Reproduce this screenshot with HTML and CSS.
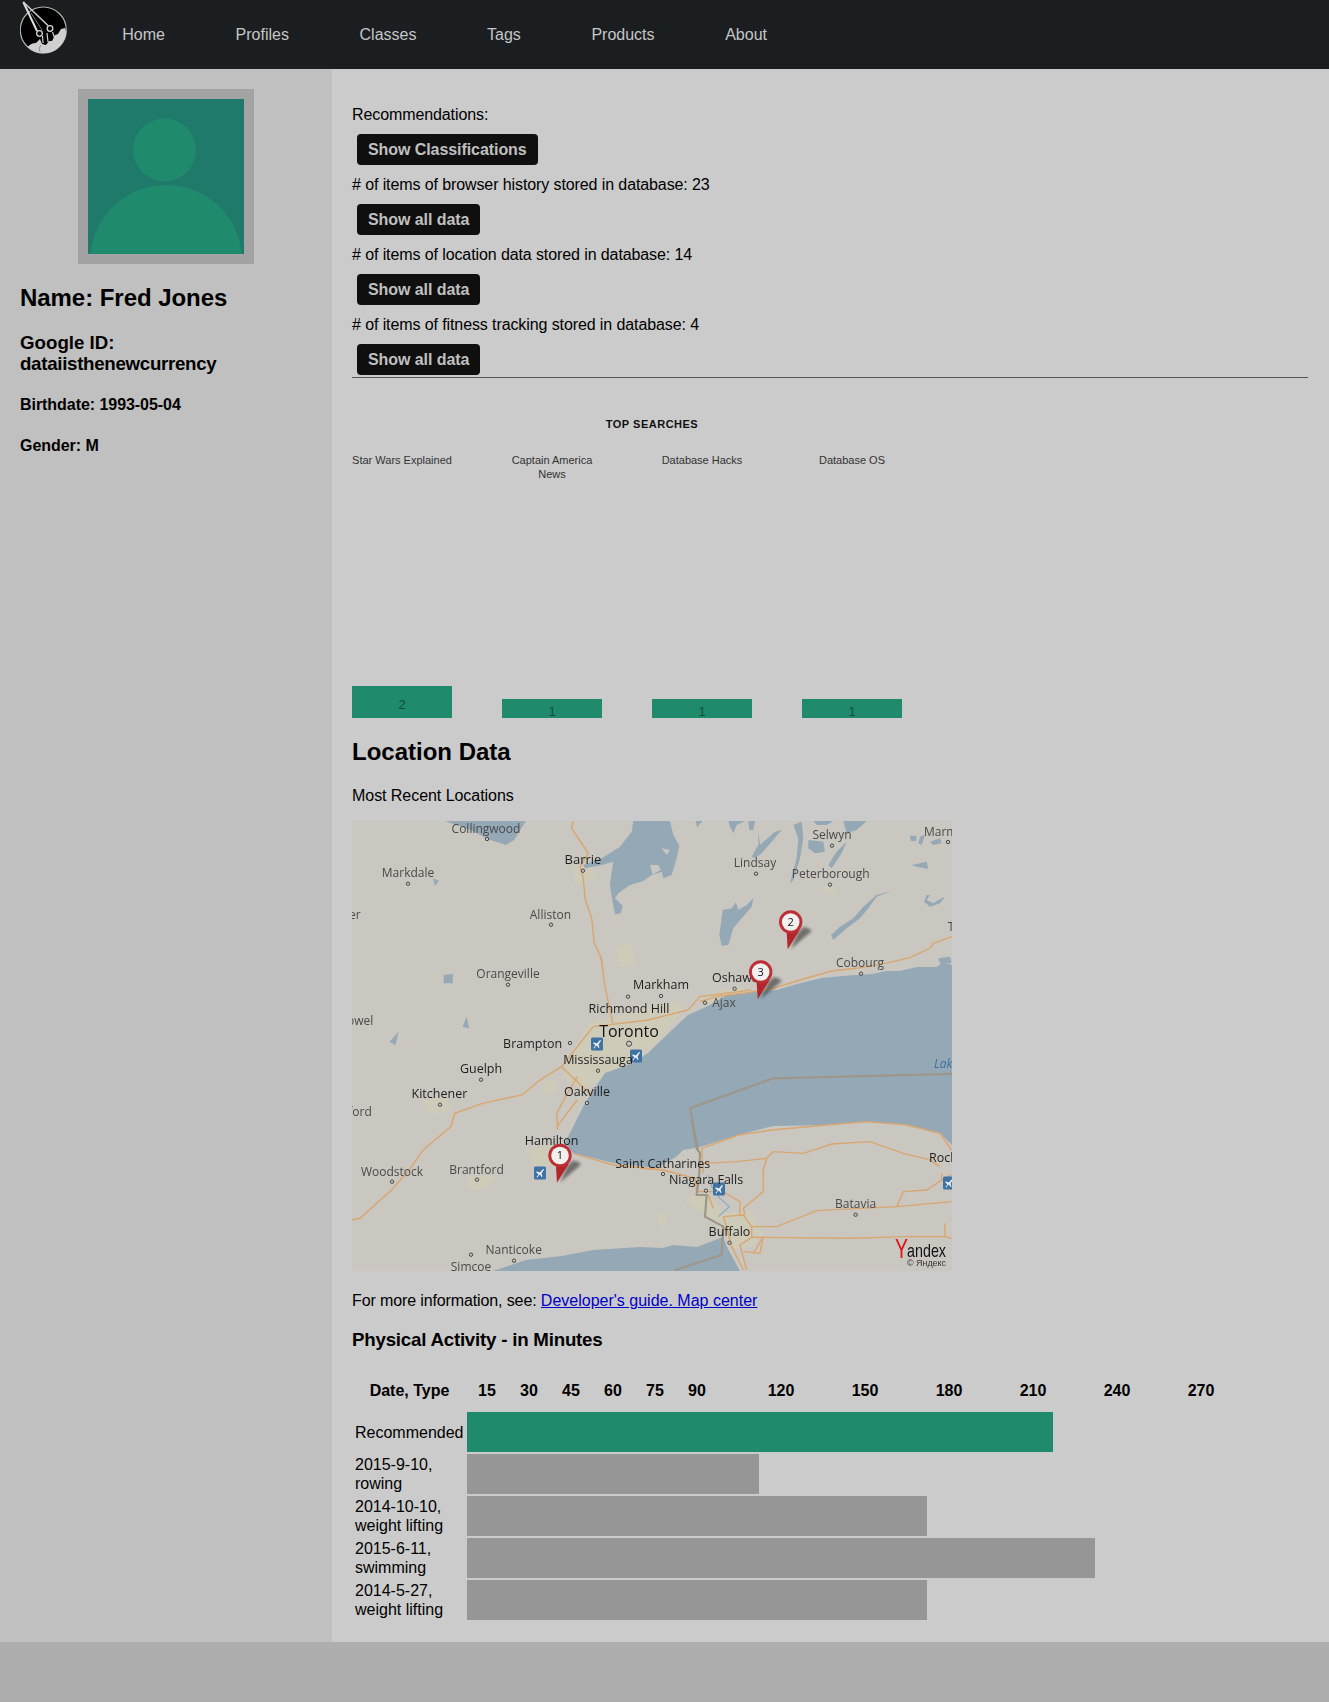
FILE: index.html
```html
<!DOCTYPE html>
<html lang="en">
<head>
<meta charset="utf-8">
<title>Fred Jones</title>
<link rel="stylesheet" href="styles.css">
</head>
<body>
<header class="topbar">
  <a class="logo" href="#" aria-label="Home">
    <svg width="52" height="56" viewBox="20 0 52 56">
      <circle cx="43.3" cy="30" r="23" fill="#000" stroke="#b0b0b0" stroke-width="1.2"/>
      <path d="M27.5 47 Q31 43 36 43 L40 39 L42 44 L46 45 L49 41 L52 41 L55 35 L58 34 L61 29 L65 28 L66.3 32 A23 23 0 0 1 27.5 47Z" fill="#cfcfcf"/>
      <path d="M40 52 Q38 48 41 45" stroke="#8a8a8a" stroke-width="1" fill="none"/>
      <path d="M23.3 2 L37 31" stroke="#dedede" stroke-width="2" fill="none"/>
      <path d="M23.3 2 L48 25.5" stroke="#cfcfcf" stroke-width="1.5" fill="none"/>
      <path d="M31 13 L42 30" stroke="#777" stroke-width="1" fill="none"/>
      <circle cx="39.5" cy="33.5" r="2.8" fill="#000" stroke="#d5d5d5" stroke-width="1.3"/>
      <circle cx="50" cy="28.5" r="2.8" fill="#000" stroke="#d5d5d5" stroke-width="1.3"/>
      <path d="M42.5 36 L43 43 M47 33 L48 42 M52.5 32 L55 39" stroke="#cfcfcf" stroke-width="1.2" fill="none"/>
    </svg>
  </a>
  <nav class="mainnav">
    <a href="#">Home</a>
    <a href="#">Profiles</a>
    <a href="#">Classes</a>
    <a href="#">Tags</a>
    <a href="#">Products</a>
    <a href="#">About</a>
  </nav>
</header>

<div class="layout">
  <aside class="sidebar">
    <div class="avatar">
      <svg width="156" height="155" viewBox="0 0 156 155">
        <rect width="156" height="155" fill="#1f7a6b"/>
        <circle cx="76.5" cy="51" r="31.5" fill="#1f8a6c"/>
        <path d="M2.7 155 A75.8 75.8 0 0 1 153.7 155Z" fill="#1f8a6c"/>
      </svg>
    </div>
    <h2 class="name">Name: Fred Jones</h2>
    <h3 class="gid">Google ID: <span class="handle">dataiisthenewcurrency</span></h3>
    <h4 class="fact">Birthdate: 1993-05-04</h4>
    <h4 class="fact">Gender: M</h4>
  </aside>

  <main class="content">
    <section class="stats">
      <div class="stat-text">Recommendations:</div>
      <button class="btn">Show Classifications</button>
      <div class="stat-text"># of items of browser history stored in database: 23</div>
      <button class="btn">Show all data</button>
      <div class="stat-text"># of items of location data stored in database: 14</div>
      <button class="btn">Show all data</button>
      <div class="stat-text"># of items of fitness tracking stored in database: 4</div>
      <button class="btn">Show all data</button>
    </section>
    <hr class="rule">

    <section class="searches">
      <div class="searches-title">TOP SEARCHES</div>
      <div class="searches-grid">
        <div class="search"><div class="search-label">Star Wars Explained</div><div class="search-bar tall">2</div></div>
        <div class="search"><div class="search-label">Captain America News</div><div class="search-bar short">1</div></div>
        <div class="search"><div class="search-label">Database Hacks</div><div class="search-bar short">1</div></div>
        <div class="search"><div class="search-label">Database OS</div><div class="search-bar short">1</div></div>
      </div>
    </section>

    <h2 class="section-title">Location Data</h2>
    <p class="subtitle">Most Recent Locations</p>

    <svg class="map" width="600" height="450" viewBox="0 0 600 450">
      <defs>
        <g id="airport">
          <rect x="-6" y="-6.5" width="12" height="13" rx="1.5" fill="#3f73a3"/>
          <path d="M-3.5 4 L-1.5 1.5 L-4 -1 L-3 -1.5 L0 -.5 L2.5 -3.5 Q4 -4.5 4 -3.5 L1.5 .5 L2.5 3.5 L1.5 4 L0 1.5 L-2 3 L-2 4.5Z" fill="#eef2f5"/>
        </g>
        <g id="pin">
          <path d="M7 11 L13 5 Q19 6 21 9 L0 27Z" fill="#333" opacity=".6" class="pin-shadow"/>
          <path d="M-4 11 L-3 27.3 L9 8Z" fill="#b1252b"/>
          <circle r="11.7" fill="#bd2f36"/>
          <circle r="8.8" fill="#f1f0ee"/>
        </g>
      </defs>
      <rect width="600" height="450" fill="#cac7c0"/>

      <g transform="translate(-11.86 -11) scale(.3953 .3333)">
        <path class="town" d="M630 640 L690 620 L850 575 L870 590 L830 660 L760 750 L680 790 L620 840 L560 800 L600 700Z"/>
        <path class="town" d="M210 870 L270 860 L280 900 L225 915Z"/>
        <path class="town" d="M320 1100 L400 1095 L370 1135 L325 1138Z"/>
        <path class="town" d="M470 1020 L540 1005 L560 1070 L490 1065Z"/>
        <path class="town" d="M510 815 L550 810 L545 850 L520 850Z"/>
        <path class="town" d="M900 560 L1010 530 L1050 550 L950 590Z"/>
        <path class="town" d="M1222 228 L1255 224 L1250 255 L1228 250Z"/>
        <path class="water" d="M265 33 L470 33 L440 90 L420 105 L380 90 L330 60Z"/>
        <path class="water" d="M262 495 L285 492 L285 520 L262 520Z M235 205 L250 212 L240 228Z M320 620 L326 655 L310 650Z M125 695 L148 665 L140 705Z"/>
        <path class="water" d="M900 33 L915 33 L903 52Z"/>
        <path class="road" d="M30 1230 L50 1225 L130 1140 L175 1080 L210 1020 L280 950 L290 910 L360 880 L460 855 L500 815 L560 770 L640 650 L780 630 L880 600 L910 560 L1040 540"/>
        <path class="road" d="M660 440 L670 530 L690 640"/>
        <path class="road" d="M550 960 L548 910 L570 860 L600 800 M548 950 L600 870 M560 770 L640 860"/>
        <path class="road" d="M590 1030 L690 1065 L820 1080"/>
      </g>

      <path class="water" d="M600 144 L590 141 L585 146 L565 146 L548 150 L535 150 L520 153 L490 155 L470 157 L445 163 L425 169 L398 171 L375 174 L356 185 L336 194 L320 209 L296 232 L281 242 L253 252 L233 282 L221 306 L213 322 L221 332 L261 342 L304 347 L324 336 L331 329 L348 326 L386 314 L421 305 L475 304 L515 301 L555 304 L588 312 L600 324Z"/>
      <path class="water" d="M141 450 L174 439 L210 435 L241 429 L288 426 L311 427 L321 424 L345 426 L371 416 L375 426 L388 450Z"/>

      <g transform="translate(178 -6) scale(.3333)">
        <path class="town" d="M130 150 L190 160 L195 190 L135 208Z"/>
        <path class="town" d="M260 395 L305 380 L318 450 L265 455Z"/>
        <path class="water" d="M160 150 L215 130 L270 95 L305 50 L310 18 L420 18 L430 60 L448 92 L440 130 L425 180 L400 190 L395 170 L365 180 L340 198 L300 210 L265 235 L255 250 L278 272 L272 295 L255 298 L245 245 L240 210 L245 170 L250 140 L215 150 L165 160Z"/>
        <path class="land" d="M360 150 L385 150 L392 165 L368 178Z M395 100 L420 105 L410 120Z"/>
        <path class="water" d="M500 35 L518 18 L500 18Z"/>
        <path class="road" d="M130 18 L125 40 L175 115 L150 155 L160 190 L165 250 L185 310 L193 385 L210 420 L218 450"/>
      </g>

      <g transform="translate(348 -6) scale(.3333)">
        <path class="water" d="M160 250 L155 275 L125 310 L100 340 L85 390 L65 392 L58 360 L68 285 L95 280 L108 262 L115 285 L140 270Z"/>
        <path class="water" d="M575 228 L530 245 L505 280 L480 310 L440 340 L400 375 L393 360 L420 335 L460 310 L490 275 L530 240Z"/>
        <path class="water" d="M85 18 L135 18 L110 30 L100 55 L90 35Z M145 18 L165 18 L160 45 L148 45Z"/>
        <path class="water" d="M175 50 L180 90 L225 50 L245 45 L215 80 L185 115 L165 130 L155 125 L175 90Z"/>
        <path class="water" d="M280 30 L305 20 L310 70 L300 130 L280 195 L270 205 L290 130 L295 70Z"/>
        <path class="water" d="M325 75 L370 80 L375 110 L345 115 L325 100Z M430 18 L500 18 L470 45 L440 55Z M340 18 L400 18 L380 30 L350 30Z"/>
        <path class="water" d="M410 110 L440 80 L425 115 L395 160 L385 150Z"/>
        <path class="water" d="M630 62 L650 62 L648 78 L632 78Z M660 65 L675 60 L665 90 L655 85Z M690 80 L720 70 L725 85 L700 90Z"/>
        <path class="water" d="M635 150 L680 140 L685 162 L650 155Z"/>
        <path class="water" d="M680 240 L690 240 L680 255 L700 265 L725 250 L735 245 L720 265 L690 275 L672 260Z"/>
        <path class="water" d="M715 430 L750 425 L755 445 L720 445Z"/>
        <path class="road" d="M755 365 L700 385 L690 400 L630 428 L555 445 L470 460 L395 468 L300 495 L220 520 L130 535 L50 545 L0 560"/>
      </g>

      <g transform="translate(288 299) scale(.3333)">
        <path class="town" d="M140 230 L200 220 L250 280 L335 270 L370 340 L340 380 L280 385 L250 340 L190 280 L140 250Z"/>
        <path class="town" d="M50 280 L80 280 L75 320 L55 310Z"/>
        <path class="river" d="M205 165 L215 200 L240 235 L268 260 L235 290"/>
        <path class="road" d="M185 85 L190 160"/>
        <path class="road" d="M185 85 L295 45 L395 30 L560 15 L680 5 L800 15 L900 40 L935 90"/>
        <path class="road" d="M190 130 L290 125 L380 115 L400 95 L490 100 L575 72 L690 65 L790 100 L865 118 L900 140"/>
        <path class="road" d="M380 115 L370 150 L370 215 L310 265 L315 285"/>
        <path class="road" d="M335 320 L410 320 L530 272 L720 262 L770 260 L935 245"/>
        <path class="road" d="M770 260 L790 215 L860 210 L905 180 L935 165 M905 160 L905 185"/>
        <path class="road" d="M335 352 L640 355 L800 350 L915 350 L935 355 M915 310 L915 350"/>
        <path class="road" d="M250 290 L310 285 L335 320 L335 352 L300 375 L320 450"/>
        <path class="road" d="M250 290 L265 340 L275 380 L310 450"/>
        <path class="road" d="M0 145 L70 150 L165 175 L170 215 L250 215 L300 245 L300 285"/>
        <path class="road" d="M205 225 L220 265 M340 400 L370 350 L360 400 L310 395"/>
      </g>

      <g transform="translate(-11.86 -11) scale(.3953 .3333)">
        <path class="border" d="M1548 792 L1095 805 L885 895 L905 1020"/>
      </g>
      <g transform="translate(288 299) scale(.3333)">
        <path class="border" d="M155 0 L170 85 L180 100 L178 160 L170 225 L200 225 L195 290 L250 320 L245 405 L105 450"/>
      </g>

      <g class="dots">
        <circle cx="135" cy="18" r="1.7"/><circle cx="231" cy="49.7" r="1.7"/><circle cx="56" cy="62.7" r="1.7"/><circle cx="199" cy="103.7" r="1.7"/>
        <circle cx="404" cy="52.7" r="1.7"/><circle cx="480" cy="24.7" r="1.7"/><circle cx="596" cy="21" r="1.7"/><circle cx="478" cy="63.7" r="1.7"/>
        <circle cx="156" cy="163.7" r="1.7"/><circle cx="309" cy="175" r="1.7"/><circle cx="276" cy="175.7" r="1.7"/><circle cx="382.6" cy="167.7" r="1.7"/>
        <circle cx="353" cy="181.7" r="1.7"/><circle cx="509" cy="152.7" r="1.7"/><circle cx="277" cy="222.7" r="2.6"/><circle cx="218" cy="222" r="1.7"/>
        <circle cx="246" cy="249.7" r="1.7"/><circle cx="129" cy="258.7" r="1.7"/><circle cx="88" cy="283.7" r="1.7"/><circle cx="235" cy="282" r="1.7"/>
        <circle cx="40" cy="360.7" r="1.7"/><circle cx="125" cy="358.7" r="1.7"/><circle cx="311" cy="353" r="1.7"/><circle cx="354" cy="369.7" r="1.7"/>
        <circle cx="503.6" cy="393.7" r="1.7"/><circle cx="377.5" cy="421.7" r="1.7"/><circle cx="162" cy="439.7" r="1.7"/><circle cx="119" cy="433.7" r="1.7"/>
      </g>

      <use href="#airport" x="245" y="223"/><use href="#airport" x="284" y="235"/><use href="#airport" x="188" y="352"/><use href="#airport" x="367" y="368"/><use href="#airport" x="597" y="362"/>

      <g class="labels" transform="translate(0 .7)">
        <text x="134" y="11">Collingwood</text><text x="231" y="42.3" class="dark barrie">Barrie</text><text x="56" y="55">Markdale</text><text x="198.4" y="97.3">Alliston</text>
        <text x="403" y="45.7">Lindsay</text><text x="480" y="17.7">Selwyn</text><text class="start" x="572" y="14">Marm</text><text x="478.7" y="56.7">Peterborough</text>
        <text x="156" y="156.7">Orangeville</text><text x="309" y="167.3" class="dark">Markham</text><text x="277" y="191.3" class="dark">Richmond Hill</text>
        <text class="start dark" x="360" y="160.3">Oshawa</text><text x="372" y="185.7">Ajax</text><text x="508" y="145.7">Cobourg</text>
        <text x="277" y="215" class="city">Toronto</text><text x="180.6" y="226.7" class="dark">Brampton</text><text x="246" y="242.7" class="dark">Mississauga</text>
        <text x="129" y="251.7" class="dark">Guelph</text><text x="87.4" y="276" class="dark">Kitchener</text><text x="235" y="274.3" class="dark">Oakville</text>
        <text x="199.6" y="323.3" class="dark">Hamilton</text><text x="40" y="354">Woodstock</text><text x="124.5" y="352">Brantford</text>
        <text x="310.7" y="346.3" class="dark">Saint Catharines</text><text x="354" y="362.7" class="dark">Niagara Falls</text><text x="503.6" y="386">Batavia</text>
        <text x="377.5" y="414.3" class="dark">Buffalo</text><text x="161.7" y="432.3">Nanticoke</text><text x="119" y="449">Simcoe</text>
        <text class="end" x="8.7" y="97.7">er</text><text class="end" x="21.3" y="203.7">owel</text><text class="end" x="19.8" y="294">ford</text>
        <text class="start dark" x="577" y="340.7">Rochester</text><text class="start lake" x="582" y="246.3">Lake</text><text class="start" x="595.7" y="109">T</text>
      </g>

      <use href="#pin" x="208" y="334.5"/><use href="#pin" x="438.7" y="101"/><use href="#pin" x="408.7" y="151"/>
      <g class="pin-nums">
        <text x="208" y="338.3">1</text><text x="438.7" y="104.8">2</text><text x="408.7" y="154.8">3</text>
      </g>

      <g class="attrib">
        <text class="ya-y" x="543" y="437" textLength="13" lengthAdjust="spacingAndGlyphs">Y</text>
        <text class="ya" x="555" y="436" textLength="39" lengthAdjust="spacingAndGlyphs">andex</text>
        <text class="ya-c" x="555" y="444.5" textLength="39" lengthAdjust="spacingAndGlyphs">© Яндекс</text>
      </g>
    </svg>

    <p class="more">For more information, see: <a class="more-link" href="#">Developer's guide. Map center</a></p>

    <h3 class="activity-title">Physical Activity - in Minutes</h3>
    <table class="activity">
      <thead>
        <tr>
          <th class="first">Date, Type</th>
          <th>15</th><th>30</th><th>45</th><th>60</th><th>75</th><th>90</th><th></th><th>120</th><th></th><th>150</th><th></th><th>180</th><th></th><th>210</th><th></th><th>240</th><th></th><th>270</th>
        </tr>
      </thead>
      <tbody>
        <tr><td class="first">Recommended</td><td class="bar rec" colspan="14"></td></tr>
        <tr><td class="first">2015-9-10, rowing</td><td class="bar" colspan="7"></td></tr>
        <tr><td class="first">2014-10-10, weight lifting</td><td class="bar" colspan="11"></td></tr>
        <tr><td class="first">2015-6-11, swimming</td><td class="bar" colspan="15"></td></tr>
        <tr><td class="first">2014-5-27, weight lifting</td><td class="bar" colspan="11"></td></tr>
      </tbody>
    </table>
  </main>
</div>
<footer class="pagefoot"></footer>
</body>
</html>
```
FILE: styles.css
```css
* { box-sizing: border-box; }
html, body { margin: 0; padding: 0; }
body {
  background: #aeaeae;
  color: #000;
  font-family: "Liberation Sans", Arial, sans-serif;
  font-size: 16px;
}
.topbar {
  display: flex;
  height: 69px;
  background: #1a1e20;
  padding-left: 20px;
}
.logo { display: block; height: 56px; }
.logo svg { display: block; }
.mainnav { display: flex; margin-left: 15px; padding-top: 1px; align-items: center; height: 69px; }
.mainnav a { color: #c6c6c6; text-decoration: none; padding: 0 35.3px; }

.layout { display: flex; height: 1573px; }
.sidebar {
  width: 332px;
  flex: none;
  background: #c0c0c0;
  padding: 20px 20px 0;
}
.avatar {
  width: 176px;
  height: 175px;
  margin: 0 auto 0 58px;
  border: 10px solid #a3a3a3;
  background: #1f7a6b;
}
.avatar svg { display: block; }
.name { font-size: 24px; margin: 20px 0 0; line-height: 28px; letter-spacing: -.05px; }
.gid { font-size: 18.72px; margin: 20px 0 0; line-height: 21px; }
.handle { letter-spacing: -.3px; }
.fact { font-size: 16px; margin: 21px 0 0; line-height: 20px; letter-spacing: -.05px; }

.content {
  flex: 1;
  background: #cbcbcb;
  padding: 37px 21px 0 20px;
  min-width: 0;
}
.stat-text { height: 18px; line-height: 18px; margin-bottom: 10px; letter-spacing: -.1px; }
.btn {
  display: block;
  height: 31px;
  margin: 0 0 11px 5px;
  padding: 0 11px;
  background: #0f0f0f;
  color: #c0c0c0;
  font: bold 16px "Liberation Sans", Arial, sans-serif;
  letter-spacing: -.07px;
  border: 0;
  border-radius: 4px;
}
.stats .btn:last-child { margin-bottom: 0; }
.rule { border: 0; border-top: 1px solid #555; margin: 2px 0 0; }

.searches { height: 340px; }
.searches-title {
  width: 600px;
  text-align: center;
  font-size: 11px;
  font-weight: bold;
  letter-spacing: .5px;
  padding-top: 39px;
  line-height: 14px;
  color: #111;
}
.searches-grid {
  display: grid;
  grid-template-columns: repeat(4, 100px);
  gap: 50px;
  height: 264px;
  margin-top: 23px;
}
.search { display: flex; flex-direction: column; justify-content: space-between; }
.search-label {
  font-size: 11px;
  line-height: 13.5px;
  text-align: center;
  color: #333;
}
.search-bar {
  background: #1f8a6c;
  color: #0f4f3f;
  font-size: 13px;
  line-height: 15px;
  text-align: center;
}
.search-bar.tall { height: 32px; padding-top: 11px; }
.search-bar.short { height: 19px; padding-top: 5px; }

.section-title { font-size: 24px; line-height: 28px; margin: 20px 0 0; }
.subtitle { margin: 21px 0 16px; line-height: 18px; letter-spacing: -.05px; }
.map { display: block; filter: blur(.35px); }
.town { fill: #cfcbb9; }
.land { fill: #cac7c0; }
.water { fill: #94a8b6; }
.river { fill: none; stroke: #8aa8c4; stroke-width: 1.2; vector-effect: non-scaling-stroke; }
.road { fill: none; stroke: #d9a670; stroke-width: 1.4; vector-effect: non-scaling-stroke; }
.border { fill: none; stroke: #9f968a; stroke-width: 2.2; vector-effect: non-scaling-stroke; }
.dots circle { fill: #cac7c0; stroke: #3a3a3a; stroke-width: .9; }
.labels text {
  font-family: "Open Sans", "Noto Sans", sans-serif;
  font-size: 12px;
  text-anchor: middle;
  fill: #4a4a4a;
}
.labels text.dark { fill: #1e1e1e; font-size: 12.5px; }
.labels text.barrie { font-size: 13px; }
.labels text.city { fill: #111; font-size: 16px; }
.labels text.start { text-anchor: start; }
.labels text.end { text-anchor: end; }
.labels text.lake { fill: #3f6f9f; font-style: italic; }
.pin-shadow { filter: blur(1.5px); }
.pin-nums text {
  font-family: "Open Sans", sans-serif;
  font-size: 11px;
  text-anchor: middle;
  fill: #111;
}
.attrib text { font-family: "Liberation Sans", sans-serif; }
.ya-y { fill: #e01414; font-size: 27px; }
.ya { fill: #111; font-size: 19px; }
.ya-c { fill: #333; font-size: 9px; }

.more { margin: 21px 0 0; line-height: 18px; letter-spacing: -.12px; }
.more-link { color: #0000c8; letter-spacing: 0; }
.activity-title { font-size: 18.72px; line-height: 22px; margin: 19px 0 0; letter-spacing: -.22px; }

.activity {
  table-layout: fixed;
  border-collapse: separate;
  border-spacing: 2px;
  width: 871px;
  margin-top: 18px;
}
.activity th { padding: 1px; height: 39px; width: 40px; font-size: 16px; }
.activity th.first { width: 111px; }
.activity td { padding: 1px; height: 40px; line-height: 19px; }
.activity td.bar { background: #969696; padding: 0; }
.activity td.rec { background: #1f8a6c; }

.pagefoot { height: 60px; background: #aeaeae; }
```
